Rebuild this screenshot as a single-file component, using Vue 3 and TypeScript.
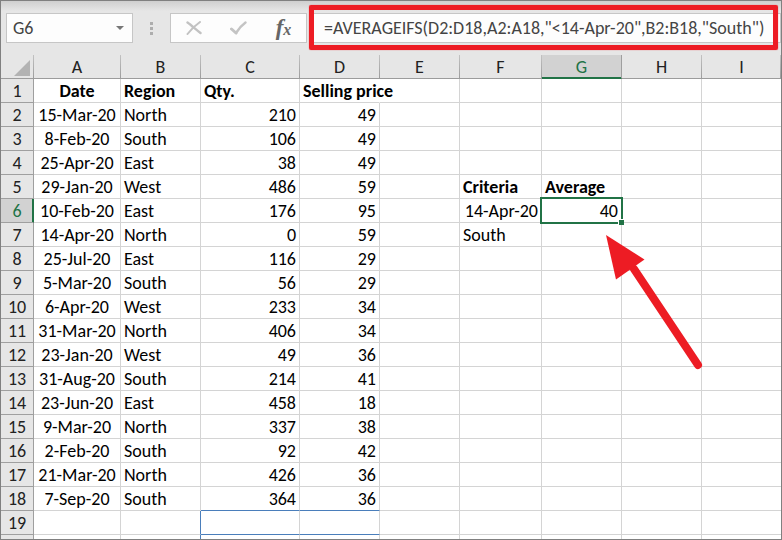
<script setup lang="ts">
import { ref } from 'vue'

type Align = 'left' | 'center' | 'right'

interface Cell {
  text: string
  align: Align
  bold?: boolean
}

const columns = ['A', 'B', 'C', 'D', 'E', 'F', 'G', 'H', 'I']
const numberedRows = 19

const records: [string, string, number, number][] = [
  ['15-Mar-20', 'North', 210, 49],
  ['8-Feb-20', 'South', 106, 49],
  ['25-Apr-20', 'East', 38, 49],
  ['29-Jan-20', 'West', 486, 59],
  ['10-Feb-20', 'East', 176, 95],
  ['14-Apr-20', 'North', 0, 59],
  ['25-Jul-20', 'East', 116, 29],
  ['5-Mar-20', 'South', 56, 29],
  ['6-Apr-20', 'West', 233, 34],
  ['31-Mar-20', 'North', 406, 34],
  ['23-Jan-20', 'West', 49, 36],
  ['31-Aug-20', 'South', 214, 41],
  ['23-Jun-20', 'East', 458, 18],
  ['9-Mar-20', 'North', 337, 38],
  ['2-Feb-20', 'South', 92, 42],
  ['21-Mar-20', 'North', 426, 36],
  ['7-Sep-20', 'South', 364, 36],
]

const cells: Record<string, Cell> = {
  A1: { text: 'Date', align: 'center', bold: true },
  B1: { text: 'Region', align: 'left', bold: true },
  C1: { text: 'Qty.', align: 'left', bold: true },
  D1: { text: 'Selling price', align: 'left', bold: true },
  F5: { text: 'Criteria', align: 'left', bold: true },
  G5: { text: 'Average', align: 'left', bold: true },
  F6: { text: '14-Apr-20', align: 'right' },
  G6: { text: '40', align: 'right' },
  F7: { text: 'South', align: 'left' },
}

records.forEach(([date, region, qty, price], i) => {
  const row = i + 2
  cells[`A${row}`] = { text: date, align: 'center' }
  cells[`B${row}`] = { text: region, align: 'left' }
  cells[`C${row}`] = { text: String(qty), align: 'right' }
  cells[`D${row}`] = { text: String(price), align: 'right' }
})

const selected = ref('G6')
const formula = ref('=AVERAGEIFS(D2:D18,A2:A18,"<14-Apr-20",B2:B18,"South")')

const blueBottom = ['C18', 'D18', 'C19', 'D19']
const blueRight = ['B19', 'B20']

function cellClass(id: string): (string | Record<string, boolean>)[] {
  const cell = cells[id]
  return [
    cell ? cell.align : '',
    {
      bold: !!cell?.bold,
      spill: id === 'D1',
      selected: id === selected.value,
      'blue-bottom': blueBottom.includes(id),
      'blue-right': blueRight.includes(id),
    },
  ]
}
</script>

<template>
  <main class="window">
    <div class="formula-bar">
      <div class="name-box">
        <input v-model="selected" class="name-input" aria-label="Name box" />
        <button class="drop" type="button" aria-label="Open name list">
          <svg width="8" height="4" viewBox="0 0 8 4"><path d="M0 0H8L4 4Z" fill="#777" /></svg>
        </button>
      </div>
      <div class="grip"><i></i><i></i><i></i></div>
      <div class="tools">
        <button type="button" aria-label="Cancel">
          <svg width="16" height="14" viewBox="0 0 16 14" fill="none" stroke="#c2c2c2" stroke-linecap="round">
            <path d="M1.500 1.500C5 4 10 8.500 14.500 12" stroke-width="2.400" />
            <path d="M14 1C9 4.500 4.500 9 1.500 13" stroke-width="2" />
          </svg>
        </button>
        <button type="button" aria-label="Enter">
          <svg width="17" height="14" viewBox="0 0 17 14" fill="none" stroke="#c4c4c4" stroke-linecap="round" stroke-linejoin="round">
            <path d="M1.500 8L6 12" stroke-width="3" />
            <path d="M6 12Q10 5.500 15.500 1.500" stroke-width="2.400" />
          </svg>
        </button>
        <button class="fx" type="button" aria-label="Insert function"><span class="f">f</span><span class="x">x</span></button>
      </div>
      <div class="formula">
        <input v-model="formula" class="formula-input" aria-label="Formula bar" spellcheck="false" />
        <div class="highlight"></div>
      </div>
    </div>

    <div class="sheet">
      <table>
        <colgroup>
          <col class="w-head" />
          <col v-for="c in columns" :key="c" :class="`w-${c}`" />
        </colgroup>
        <thead>
          <tr>
            <th class="corner" aria-label="Select all">
              <svg width="16" height="16" viewBox="0 0 16 16"><path d="M16 0V16H0Z" fill="#b3b3b3" /></svg>
            </th>
            <th v-for="c in columns" :key="c" scope="col" :class="{ active: selected.startsWith(c) }">{{ c }}</th>
          </tr>
        </thead>
        <tbody>
          <tr v-for="r in numberedRows + 1" :key="r">
            <th scope="row" :class="{ active: selected.slice(1) === String(r) }">{{ r > numberedRows ? '' : r }}</th>
            <td v-for="c in columns" :key="c" :class="cellClass(c + r)">
              {{ cells[c + r]?.text }}
              <span v-if="c + r === selected" class="cursor"><i class="handle"></i></span>
            </td>
          </tr>
        </tbody>
      </table>
      <svg class="arrow" width="98" height="136" viewBox="0 0 98 136">
        <path d="M28 34L92 130" stroke="#ed1c24" stroke-width="8" stroke-linecap="round" />
        <path d="M0 0L38.500 24.500L10 44.500Z" fill="#ed1c24" />
      </svg>
    </div>
  </main>
</template>

<style>
body {
  margin: 0;
}
</style>

<style scoped>
.window {
  box-sizing: border-box;
  height: 100vh;
  display: flex;
  flex-direction: column;
  overflow: hidden;
  border: 1px solid #808080;
  background: #e6e6e6;
  color: #000;
  font-family: Carlito, Calibri, Lato, sans-serif;
  font-size: 18px;
}

input,
button {
  box-sizing: border-box;
  margin: 0;
  padding: 0;
  border: 0;
  background: none;
  color: #444;
  font: inherit;
  outline: none;
}

.formula-bar {
  display: flex;
  flex: none;
  height: 54px;
  box-sizing: border-box;
  padding: 12px 0 12px 5px;
  background: linear-gradient(#cfcfcf, #e6e6e6 10px);
}

.name-box,
.tools,
.formula-input {
  box-sizing: border-box;
  height: 30px;
  border: 1px solid #c6c6c6;
  background: #fdfdfd;
}

.name-box {
  display: flex;
  width: 127px;
}

.name-input {
  flex: 1;
  min-width: 0;
  padding-left: 6px;
}

.drop {
  display: grid;
  place-items: center;
  width: 24px;
}

.grip {
  display: flex;
  flex-direction: column;
  align-items: center;
  justify-content: center;
  gap: 2px;
  width: 37px;
}

.grip i {
  width: 3px;
  height: 3px;
  background: #adadad;
}

.tools {
  display: grid;
  grid-template-columns: repeat(3, 1fr);
  width: 137px;
}

.tools button {
  display: grid;
  place-items: center;
}

.tools .fx {
  display: flex;
  align-items: center;
  justify-content: center;
  color: #666;
  font-family: "Liberation Serif", serif;
  font-style: italic;
  font-weight: bold;
  line-height: 24px;
}

.f {
  font-size: 23px;
}

.x {
  padding-top: 4px;
  font-size: 16px;
}

.formula {
  position: relative;
  flex: 1;
  margin-left: 4px;
}

.formula-input {
  width: 100%;
  padding-left: 12px;
}

.highlight {
  position: absolute;
  inset: -8px 3px -7px -2px;
  border: 5px solid #ed1c24;
  border-radius: 2px;
  box-shadow: 0 0 1px #ed1c24;
  pointer-events: none;
}

.sheet {
  position: relative;
  flex: 1;
  min-height: 0;
}

table {
  width: 100%;
  table-layout: fixed;
  border-collapse: separate;
  border-spacing: 0;
  background: #fff;
  line-height: 22px;
}

.w-head { width: 33px; }
.w-A { width: 87px; }
.w-B, .w-D, .w-E, .w-G, .w-H { width: 80px; }
.w-C { width: 99px; }
.w-F { width: 82px; }

th,
td {
  box-sizing: border-box;
  height: 24px;
  padding: 1px 3px 0;
  border-right: 1px solid #d4d4d4;
  border-bottom: 1px solid #d4d4d4;
  white-space: nowrap;
}

th {
  padding: 1px 0 0;
  border-color: #9f9f9f;
  background: #e6e6e6;
  color: #222;
  font-weight: normal;
  text-align: center;
}

thead th {
  border-right: 1px solid;
  border-image: linear-gradient(#c4c4c4, #9b9b9b) 1;
  border-image-width: 0 1px 1px 0;
}

thead th:last-child {
  border-right: 0;
}

td:last-child {
  border-right: 0;
}

.corner {
  padding: 0 3px 2px 0;
  line-height: 0;
  text-align: right;
  vertical-align: bottom;
}

th.active {
  background: #d2d2d2;
  color: #217346;
}

thead th.active {
  box-shadow: inset 0 -1px #217346;
  border-image: none;
  border-right-color: #9f9f9f;
  border-bottom: 1px solid #217346;
}

tbody th.active {
  box-shadow: inset -1px 0 #217346;
  border-right-color: #217346;
}

.left { text-align: left; }
.center { text-align: center; }
.right { text-align: right; }
.bold { font-weight: bold; }
.spill { border-right-color: transparent; }
.selected { position: relative; }
.blue-bottom { border-bottom-color: #4a7ebb; }
.blue-right { border-right-color: #4a7ebb; }

.cursor {
  position: absolute;
  inset: -2px;
  border: 2px solid #217346;
}

.handle {
  position: absolute;
  right: -3px;
  bottom: -3px;
  width: 5px;
  height: 5px;
  border: solid #fff;
  border-width: 1px 0 0 1px;
  background: #217346;
}

.arrow {
  position: absolute;
  top: 180px;
  left: 605px;
  pointer-events: none;
}
</style>
